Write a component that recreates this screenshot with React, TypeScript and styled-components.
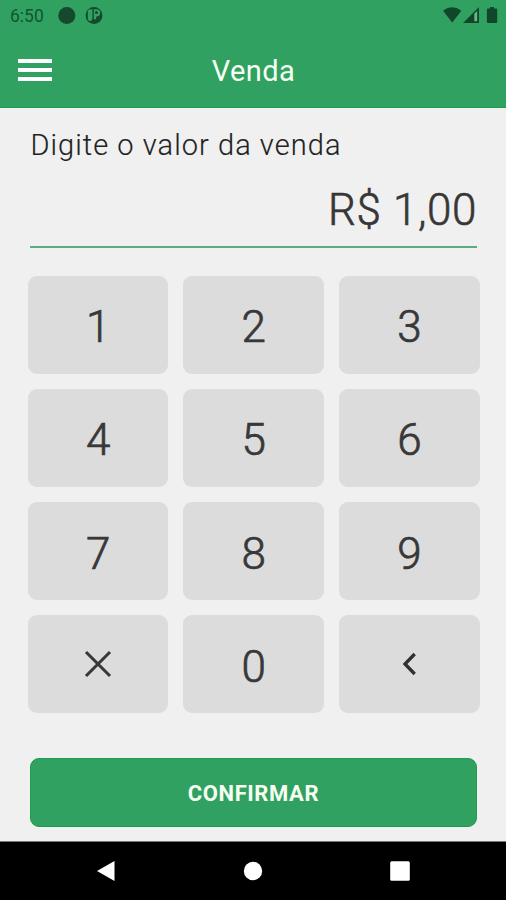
import React from "react";
import styled, { createGlobalStyle } from "styled-components";

const GlobalStyle = createGlobalStyle`
  * { box-sizing: border-box; }
  body { margin: 0; background: #f0f0f0; font-family: Roboto, sans-serif; }
  button { font-family: inherit; border: 0; padding: 0; cursor: pointer; }
`;

const Screen = styled.div`
  width: 506px;
  height: 900px;
  display: flex;
  flex-direction: column;
  background: #f0f0f0;
  overflow: hidden;
`;

const Header = styled.header`
  height: 108px;
  flex: none;
  background: #30a160;
  border-bottom: 1px solid #189c50;
`;

const StatusBar = styled.div`
  height: 32px;
  display: flex;
  align-items: center;
  padding: 0 8px 0 10px;
  color: #10572f;
`;

const Clock = styled.span`
  width: 48px;
  font-size: 17.5px;
  line-height: 32px;
`;

const StatusIcons = styled.svg<{ $end?: boolean }>`
  display: block;
  flex: none;
  margin-left: ${(p) => (p.$end ? "auto" : "0")};
`;

const Toolbar = styled.div`
  height: 76px;
  display: grid;
  grid-template-columns: 88px 1fr 88px;
  align-items: center;
`;

const MenuButton = styled.button`
  width: 34px;
  height: 23px;
  margin-left: 18px;
  display: flex;
  flex-direction: column;
  justify-content: space-between;
  background: none;
`;

const MenuLine = styled.span`
  height: 4.4px;
  background: #fff;
`;

const Title = styled.h1`
  margin: 2px 0 0 1px;
  color: #f6fff2;
  font-size: 29px;
  font-weight: 400;
  line-height: 36px;
  letter-spacing: 0.4px;
  text-align: center;
`;

const Content = styled.main`
  flex: 1;
  display: flex;
  flex-direction: column;
`;

const Label = styled.label`
  margin: 19px 30px 0 30.5px;
  height: 36px;
  color: #222;
  font-size: 29px;
  font-weight: 300;
  line-height: 36px;
  letter-spacing: 1.05px;
  white-space: nowrap;
  -webkit-text-stroke: 0.15px #222;
`;

const Amount = styled.output`
  margin: 0 29px 0 30px;
  height: 85px;
  padding-top: 19px;
  border-bottom: 2px solid #5aae7c;
  color: #363636;
  font-size: 44px;
  font-weight: 300;
  line-height: 56px;
  letter-spacing: 0.6px;
  text-align: right;
  -webkit-text-stroke: 0.6px #363636;
`;

const Keypad = styled.div`
  margin: 27.6px 26.2px 0 27.8px;
  display: grid;
  grid-template-columns: repeat(3, 1fr);
  grid-auto-rows: 98.2px;
  gap: 15px;
`;

const Key = styled.button<{ $icon?: boolean }>`
  display: flex;
  align-items: center;
  justify-content: center;
  padding-top: ${(p) => (p.$icon ? "0" : "5px")};
  border-radius: 9px;
  background: #dcdcdc;
  color: #383838;
  font-size: 44px;
  font-weight: 300;
  line-height: 52px;
  -webkit-text-stroke: 0.7px #383838;
`;

const Confirm = styled.button`
  margin: 44.4px 29px 0 30px;
  height: 69px;
  padding-top: 2px;
  border-radius: 9px;
  border: 1px solid #1b9c52;
  background: #30a160;
  color: #f6fff2;
  font-size: 22px;
  font-weight: 700;
  letter-spacing: 0.6px;
`;

const NavBar = styled.nav`
  height: 59px;
  flex: none;
  background: #000;
  border-top: 1px solid #777;
  display: flex;
  align-items: center;
  justify-content: space-between;
  padding: 0 95.5px 0 96px;
`;

const HomeIcon = styled.svg`
  margin-left: 2px;
`;

const ClearIcon = () => (
  <svg width="28" height="28" viewBox="0 0 28 28">
    <path d="M2 2 26 26M26 2 2 26" fill="none" stroke="#383838" strokeWidth="3.1" />
  </svg>
);

const BackIcon = () => (
  <svg width="14" height="24" viewBox="0 0 14 24">
    <path d="M12.7 2 3 12 12.7 22" fill="none" stroke="#303030" strokeWidth="3.3" />
  </svg>
);

const keys = ["1", "2", "3", "4", "5", "6", "7", "8", "9"];

export default function App() {
  return (
    <>
      <GlobalStyle />
      <Screen>
        <Header>
          <StatusBar>
            <Clock>6:50</Clock>
            <StatusIcons width="46" height="32" viewBox="58 0 46 32">
              <circle cx="66.8" cy="15.5" r="8.5" fill="#15482c" />
              <circle cx="94" cy="15.5" r="8.4" fill="#15482c" />
              <path d="M92.4 9.2h-1.8a2.8 2.8 0 0 0-2.8 2.8v6.8a2.3 2.3 0 0 0 4.6 0zM93.8 9.2h2.8a3.6 3.6 0 0 1 0 7.2h-.4v2.8h-2.4z" fill="#30a160" />
              <circle cx="96.5" cy="12.6" r="1.5" fill="#15482c" />
            </StatusIcons>
            <StatusIcons $end width="58" height="32" viewBox="440 0 58 32">
              <path d="M443 10.7Q452.2 4 461.4 10.7L452.2 22.5z" fill="#10472a" />
              <path d="M463 23 479 7V23z" fill="#10472a" />
              <path d="M474.3 13.7 477.2 11V21.3H474.3z" fill="#65b783" />
              <path d="M490 7h4v1.5h2.3q.9 0 .9.9V22q0 1-.9 1h-8.5q-.9 0-.9-1V9.4q0-.9.9-.9h2.2z" fill="#10472a" />
            </StatusIcons>
          </StatusBar>
          <Toolbar>
            <MenuButton aria-label="Menu">
              <MenuLine />
              <MenuLine />
              <MenuLine />
            </MenuButton>
            <Title>Venda</Title>
          </Toolbar>
        </Header>
        <Content>
          <Label>Digite o valor da venda</Label>
          <Amount>R$ 1,00</Amount>
          <Keypad>
            {keys.map((k) => (
              <Key key={k}>{k}</Key>
            ))}
            <Key $icon aria-label="Limpar">
              <ClearIcon />
            </Key>
            <Key>0</Key>
            <Key $icon aria-label="Apagar">
              <BackIcon />
            </Key>
          </Keypad>
          <Confirm>CONFIRMAR</Confirm>
        </Content>
        <NavBar>
          <svg width="20" height="22" viewBox="0 0 20 22">
            <path d="M1 11 18.5 1V21z" fill="#fff" />
          </svg>
          <HomeIcon width="20" height="20" viewBox="0 0 20 20">
            <circle cx="10" cy="10" r="9.2" fill="#fff" />
          </HomeIcon>
          <svg width="22" height="22" viewBox="0 0 22 22">
            <rect x="1.2" y="1.2" width="19.6" height="19.6" rx="1.5" fill="#fff" />
          </svg>
        </NavBar>
      </Screen>
    </>
  );
}
